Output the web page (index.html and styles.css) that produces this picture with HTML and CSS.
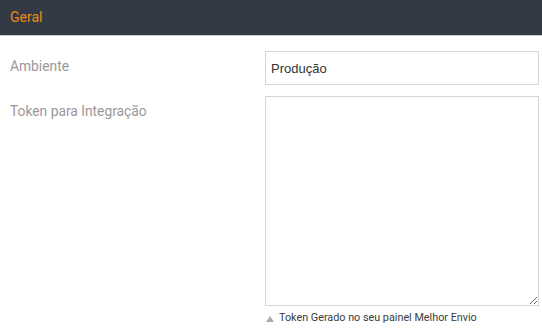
FILE: index.html
```html
<!DOCTYPE html>
<html lang="pt-BR">
<head>
    <meta charset="UTF-8">
    <meta name="viewport" content="width=device-width, initial-scale=1.0">
    <title>Geral - Melhor Envio</title>
    <link rel="stylesheet" href="styles.css">
</head>
<body>
    <div class="section-head">Geral</div>
    <div class="section-body">
        <div class="field-row">
            <label class="field-label" for="ambiente">Ambiente</label>
            <div class="field-control">
                <select id="ambiente" class="field-select">
                    <option>Produção</option>
                    <option>Sandbox</option>
                </select>
            </div>
        </div>
        <div class="field-row">
            <label class="field-label" for="token">Token para Integração</label>
            <div class="field-control">
                <textarea id="token" class="field-textarea"></textarea>
                <p class="field-note"><span class="note-arrow"></span>Token Gerado no seu painel Melhor Envio</p>
            </div>
        </div>
    </div>
</body>
</html>
```

FILE: styles.css
```css
body {
    margin: 0;
    font-family: Roboto, "Liberation Sans", sans-serif;
    background: #ffffff;
}
.section-head {
    height: 35px;
    line-height: 35px;
    padding-left: 10px;
    background: #333a46;
    color: #eb8a10; /* orange title */
    font-size: 14px;
    border-bottom: 1px solid #d0d0d0;
}
.section-body {
    padding-top: 15px;
}
.field-row {
    display: flex;
    margin-bottom: 11px;
}
.field-label {
    width: 255px;
    padding: 6px 0 0 10px;
    color: #9c9797;
    font-size: 13.8px;
    line-height: 18px;
}
.field-control {
    width: 274px;
}
.field-select {
    display: block;
    width: 274px;
    height: 34px;
    padding: 0 5px;
    border: 1px solid #d6d6d9;
    background: #ffffff;
    color: #333333;
    font-family: "Liberation Sans", Arial, sans-serif;
    font-size: 13px;
    appearance: none;
    -webkit-appearance: none;
    border-radius: 0;
}
.field-textarea {
    display: block;
    width: 274px;
    height: 210px;
    box-sizing: border-box;
    border: 1px solid #d6d6d9;
    border-radius: 0;
    margin: 0;
}
.field-note {
    margin: 5px 0 0 1px;
    font-size: 10.8px;
    color: #3a3a3a;
    line-height: 14px;
}
.note-arrow {
    display: inline-block;
    width: 0;
    height: 0;
    border-left: 4px solid transparent;
    border-right: 4px solid transparent;
    border-bottom: 6px solid #9fb0b0;
    margin-right: 5px;
    vertical-align: -1px;
}
```
